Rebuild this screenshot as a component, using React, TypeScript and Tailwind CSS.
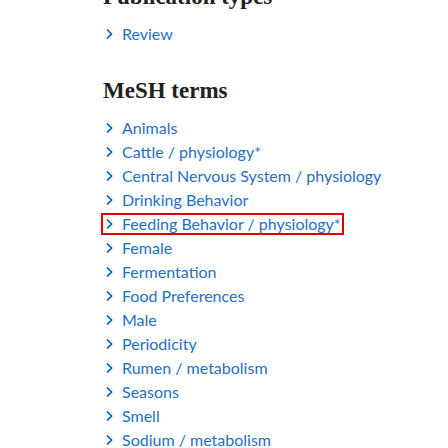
const terms = [
  "Animals",
  "Cattle / physiology*",
  "Central Nervous System / physiology",
  "Drinking Behavior",
  "Feeding Behavior / physiology*",
  "Female",
  "Fermentation",
  "Food Preferences",
  "Male",
  "Periodicity",
  "Rumen / metabolism",
  "Seasons",
  "Smell",
  "Sodium / metabolism",
];

function Chevron() {
  return (
    <svg width="7" height="12" viewBox="0 0 7 12" className="shrink-0">
      <path d="M1 1.5 L5.5 6 L1 10.5" fill="none" stroke="#0061ad" strokeWidth="1.7" />
    </svg>
  );
}

function TermLink({ label, selected }: { label: string; selected?: boolean }) {
  return (
    <div className="flex h-[24px] items-center">
      <span
        className={
          selected
            ? "inline-flex items-center gap-[9px] h-[18px] ml-[2px] pl-[3px] pr-[1px] ring-2 ring-[#e00000]"
            : "inline-flex items-center gap-[9px] pl-[5px]"
        }
      >
        <Chevron />
        <span className="text-[#1f6fc4]">{label}</span>
      </span>
    </div>
  );
}

export default function App() {
  return (
    <div className="w-[448px] h-[448px] overflow-hidden bg-white pl-[101px] font-['Lato',sans-serif] text-[16px]">
      <h2 className="mt-[-17px] ml-[2px] font-['Liberation_Serif',serif] text-[23px] font-bold text-[#212121] leading-[28px]">
        Publication types
      </h2>
      <div className="mt-[11px]">
        <TermLink label="Review" />
      </div>
      <h2 className="mt-[31px] ml-[2px] font-['Liberation_Serif',serif] text-[23px] font-bold text-[#212121] leading-[28px]">
        MeSH terms
      </h2>
      <div className="mt-[11px]">
        {terms.map((t) => (
          <TermLink key={t} label={t} selected={t.startsWith("Feeding")} />
        ))}
      </div>
    </div>
  );
}
